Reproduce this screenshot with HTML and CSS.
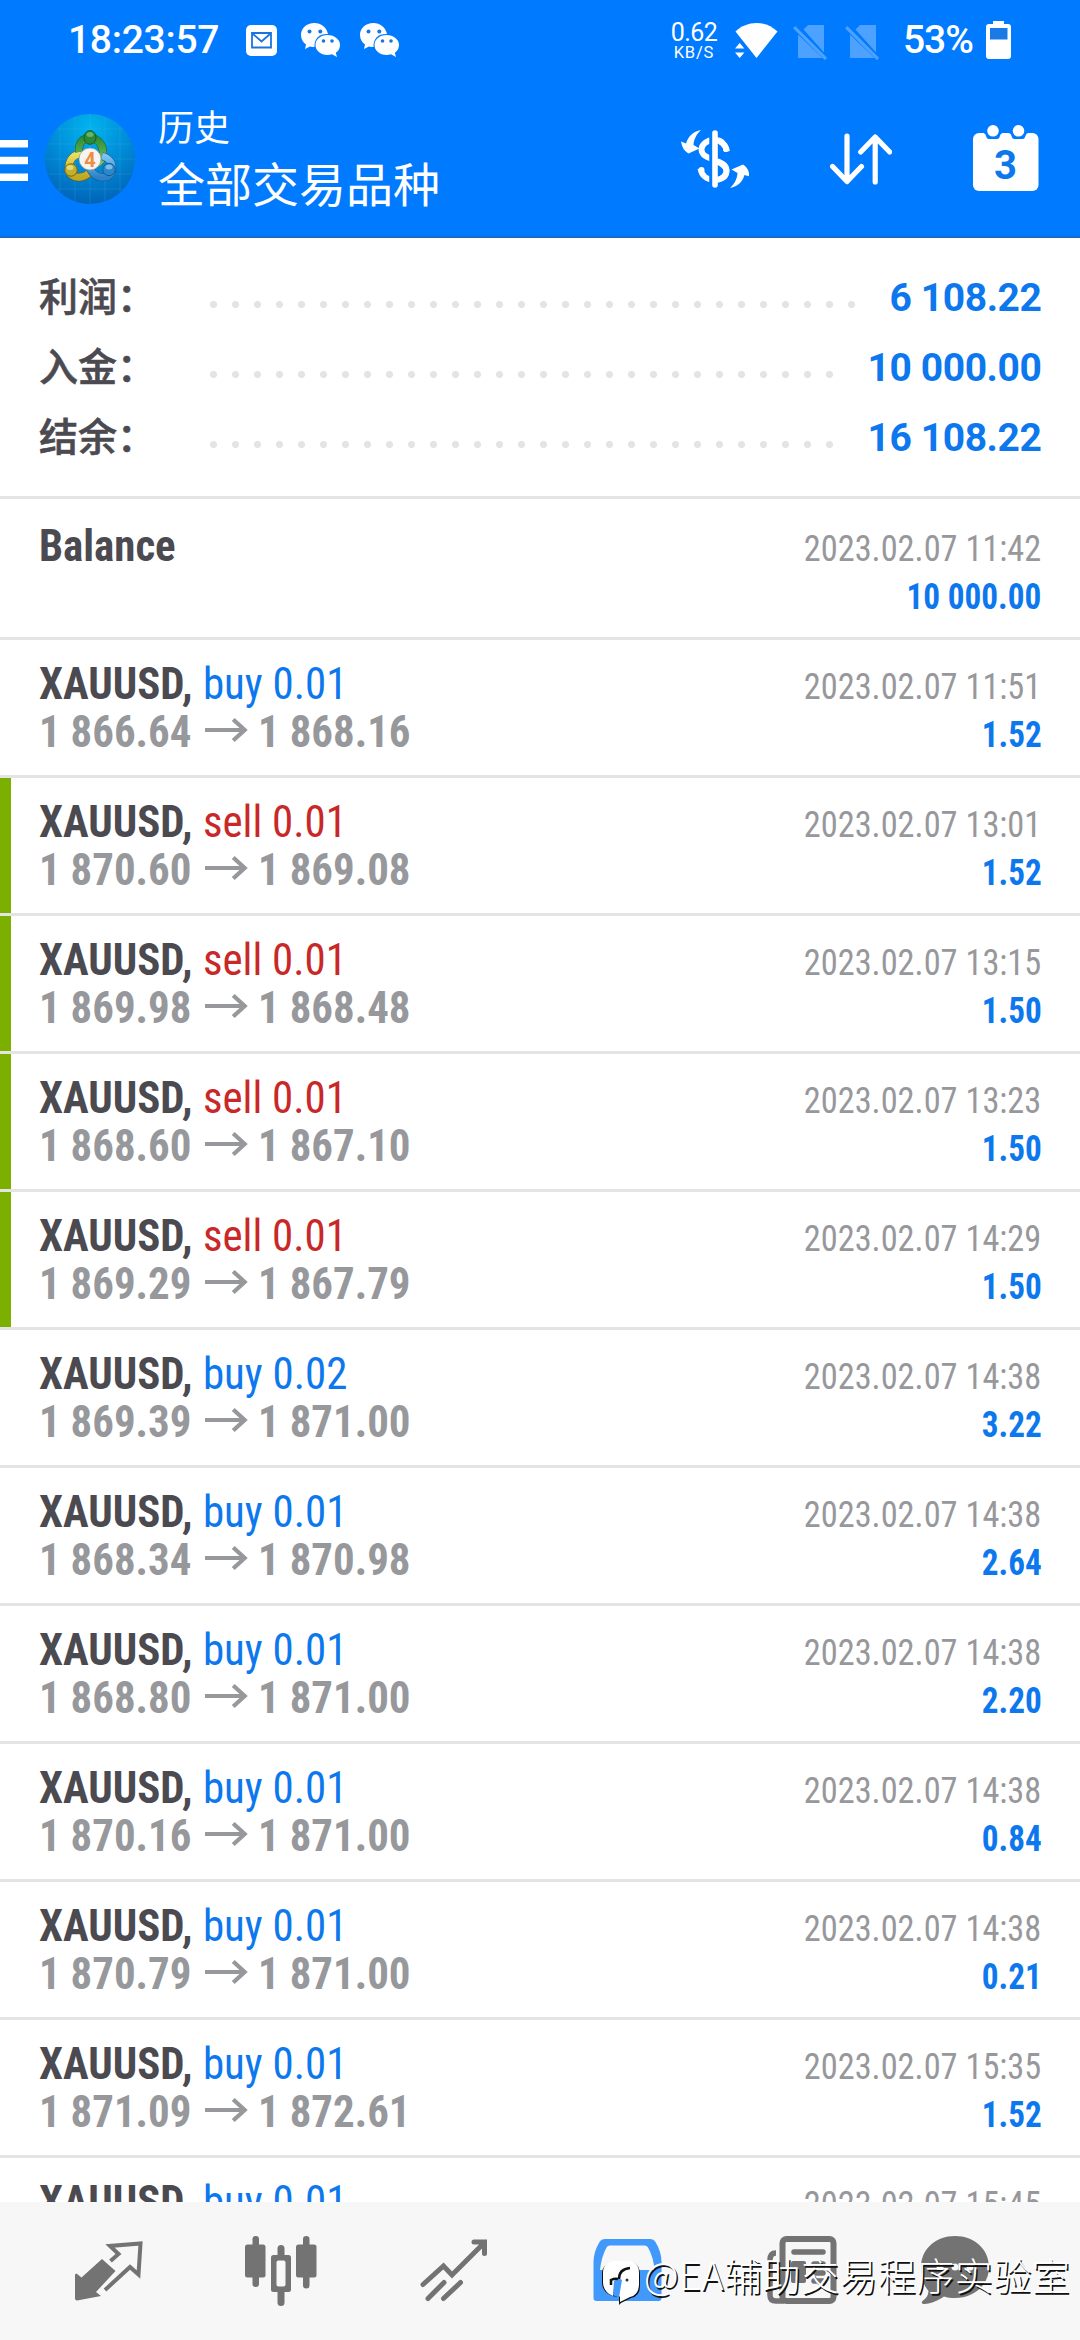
FILE: index.html
```
<!DOCTYPE html>
<html lang="zh-CN">
<head>
<meta charset="utf-8">
<title>历史</title>
<link rel="stylesheet" href="styles.css">
</head>
<body>
<svg class="defs" width="0" height="0">
  <defs>
    <symbol id="wechat" viewBox="0 0 40 36">
      <path fill="#fff" d="M14.5 1C6.500 1 1 6 1 13c0 4 2 7.500 5 9.500L5 27l5-2.500c1.500.4 3 .5 4.500.5C14 16 20 11.500 28 12 26.500 5 21 1 14.500 1z"/>
      <path fill="#fff" d="M27.500 13C20.500 13 15.500 17.500 15.500 23S20.500 33 27.500 33c1.500 0 3-.2 4.500-.7L37 35l-1.200-4.200C38.500 29 40 26.200 40 23c0-5.500-5.500-10-12.500-10z"/>
      <g fill="#1a74dd"><circle cx="9.500" cy="9.500" r="2"/><circle cx="20.300" cy="9.500" r="2"/><circle cx="23.500" cy="19" r="1.800"/><circle cx="32" cy="19" r="1.800"/></g>
    </symbol>
    <symbol id="nosim" viewBox="0 0 34 36">
      <path fill="#4da2ff" d="M10.500 5.500 15 1h16v27.500zM5 10.500 29.500 34H5z"/>
      <path stroke="#4da2ff" stroke-width="3.200" d="M1.200 3.200 33 35"/>
    </symbol>
    <symbol id="arrow" viewBox="0 0 44 26" preserveAspectRatio="none">
      <path fill="none" stroke="#97989c" stroke-width="4.200" d="M0 13h40M28.500 2.500 40 13 28.500 23.500"/>
    </symbol>
  </defs>
</svg>
<div class="screen">
  <header class="top">
    <div class="status">
      <div class="status-left">
        <span class="clock">18:23:57</span>
        <svg class="mail" viewBox="0 0 31 31"><rect width="31" height="31" rx="5" fill="#fff"/><path fill="none" stroke="#1a74dd" stroke-width="1.800" d="M6 8h19v14.500H6zM7 9l8.500 7.500L24 9"/></svg>
        <svg class="chat"><use href="#wechat"/></svg>
        <svg class="chat"><use href="#wechat"/></svg>
      </div>
      <div class="status-right">
        <div class="speed"><span class="speed-n">0.62</span><span class="speed-u">KB/S</span></div>
        <svg class="wifi" viewBox="0 0 43 36"><path fill="#fff" d="M.5 9.500C12-2 31-2 42.500 9.500L21.500 36z"/><path fill="#007aff" d="M0 13h2l9 12v11H0z"/><path fill="#fff" d="M0 26.500 4.700 21l4.700 5.500zM0 30.500h9.400L4.700 36z"/></svg>
        <svg class="sim"><use href="#nosim"/></svg>
        <svg class="sim"><use href="#nosim"/></svg>
        <span class="clock pct">53%</span>
        <svg class="battery" viewBox="0 0 25 38"><path fill="#fff" d="M7 0h11v3h4a3 3 0 0 1 3 3v29a3 3 0 0 1-3 3H3a3 3 0 0 1-3-3V6a3 3 0 0 1 3-3h4z"/><path fill="#1a7ae6" d="M4 7h17.500v11.500H4z"/></svg>
      </div>
    </div>
    <div class="bar">
      <svg class="menu" viewBox="0 0 28 41"><path fill="#fff" d="M0 0h28v7.500H0zM0 16.800h28v7.500H0zM0 33.500h28V41H0z"/></svg>
      <svg class="logo" viewBox="45 114 90 90">
        <defs>
          <radialGradient id="sky" cx=".5" cy=".15" r=".85"><stop offset="0" stop-color="#00b4ee"/><stop offset=".5" stop-color="#008dd8"/><stop offset="1" stop-color="#0064b8"/></radialGradient>
          <linearGradient id="gr" x1="0" y1="0" x2="0" y2="1"><stop offset="0" stop-color="#2c8f36"/><stop offset="1" stop-color="#7cc264"/></linearGradient>
          <linearGradient id="ye" x1="0" y1="0" x2="0" y2="1"><stop offset="0" stop-color="#e9df63"/><stop offset="1" stop-color="#c0a820"/></linearGradient>
          <linearGradient id="bl" x1="0" y1="0" x2="0" y2="1"><stop offset="0" stop-color="#7cc4f2"/><stop offset="1" stop-color="#2c82c8"/></linearGradient>
        </defs>
        <circle cx="90" cy="159" r="45" fill="url(#sky)"/>
        <path stroke="#4fb8f0" stroke-opacity=".2" fill="none" d="M60 126v66M75 117v84M90 114v90M105 117v84M120 126v66M57 129h66M49 144h82M45 159h90M49 174h82M57 189h66"/>
        <path fill="none" stroke="#6d5f10" stroke-width="8" d="M86 155c-9-3-16 2-17 11s5 12 12 11 9-5 11-9"/>
        <path fill="none" stroke="url(#ye)" stroke-width="7" d="M86 155c-9-3-16 2-17 11s5 12 12 11 9-5 11-9"/>
        <path fill="none" stroke="#1d5a28" stroke-width="8" d="M79 152c-1-9 4-14 11-14s13 6 13 14-3 10-7 12"/>
        <path fill="none" stroke="url(#gr)" stroke-width="7" d="M79 152c-1-9 4-14 11-14s13 6 13 14-3 10-7 12"/>
        <path fill="none" stroke="#174f80" stroke-width="8" d="M102 156c7 2 11 7 10 14s-6 8-12 7-9-6-11-10"/>
        <path fill="none" stroke="url(#bl)" stroke-width="7" d="M102 156c7 2 11 7 10 14s-6 8-12 7-9-6-11-10"/>
        <ellipse cx="90" cy="137.500" rx="6" ry="6.800" fill="#2a8a35" stroke="#175a22"/>
        <circle cx="71" cy="170" r="6.200" fill="#c4b02f" stroke="#78680f"/>
        <circle cx="109" cy="169.500" r="6.200" fill="#2b88cc" stroke="#155a92"/>
        <ellipse cx="90" cy="134.500" rx="3.500" ry="2.500" fill="#8fd08c" opacity=".6"/>
        <ellipse cx="70" cy="167.500" rx="3.500" ry="2.500" fill="#f2e995" opacity=".7"/>
        <ellipse cx="109" cy="167" rx="3.500" ry="2.500" fill="#9fd4f5" opacity=".7"/>
        <circle cx="90" cy="159" r="11" fill="#f6f4f3" stroke="#8a9a8c" stroke-width=".7"/>
        <text class="logo-n" x="90" y="166.500" text-anchor="middle">4</text>
      </svg>
      <div class="titles">
        <span class="title-sm">历史</span>
        <span class="title-lg">全部交易品种</span>
      </div>
      <svg class="act act-money" viewBox="681 130 68 58">
        <path fill="none" stroke="#fff" stroke-width="5.800" d="M727 151.500c-1-7-7-11.500-13-11.500-7 0-12.500 4.500-12.500 9.500 0 6 6 8 13 10.500 7 2.400 12 5 12 10.500 0 6-5.500 9.500-12 9.500-7.500 0-13-4.500-14-11.500"/>
        <path stroke="#007aff" stroke-width="9.500" d="M714 130v58"/>
        <path stroke="#fff" stroke-width="5.600" stroke-linecap="round" d="M715 133v52"/>
        <path fill="none" stroke="#fff" stroke-width="5.800" d="M716 140c6 .5 9 4 10.500 10M716 161c6 2.500 10.500 5 10.500 10s-4 8-10.500 9"/>
        <circle cx="726" cy="149" r="3" fill="#fff"/><circle cx="701.500" cy="170" r="3" fill="#fff"/>
        <path fill="#fff" d="M701 130c-5 5-7 9-7.500 15l6 3.500-11 5c-5-3-6.500-7-7.500-12l5 2c2-7 7-12 15-13.500zM730 188c5-5 7-9 7.500-15l-6-3.500 11.500-5c4.500 3 6 6.500 6.500 12l-5-1.500c-2 7-6.500 11.500-14.500 13z"/>
      </svg>
      <svg class="act act-sort" viewBox="830 133 62 52"><path fill="none" stroke="#fff" stroke-width="5.200" stroke-linecap="round" stroke-linejoin="round" d="M847 136v45M832.600 166.500 847 181.500l14.500-15M875.200 182v-45M860.700 152l14.500-15 14.500 15"/></svg>
      <svg class="act act-cal" viewBox="973 125 66 66">
        <rect x="973" y="133" width="65.500" height="58" rx="6" fill="#fff"/>
        <path fill="#007aff" d="M984 132h18v1.500c-2.500 0-1.500 5.500-5 5.500h-8c-3.500 0-2.500-5.500-5-5.500zM1009.500 132h18v1.500c-2.500 0-1.500 5.500-5 5.500h-8c-3.500 0-2.500-5.500-5-5.500z"/>
        <circle cx="993" cy="130.800" r="5.800" fill="#fff"/><circle cx="1018.500" cy="130.800" r="5.800" fill="#fff"/>
        <text class="cal-n" x="1005.500" y="178.500" text-anchor="middle">3</text>
      </svg>
    </div>
  </header>

  <section class="summary">
    <div class="sum"><span class="sum-k">利润：</span><span class="dots d30"></span><span class="sum-v">6 108.22</span></div>
    <div class="sum"><span class="sum-k">入金：</span><span class="dots d29"></span><span class="sum-v">10 000.00</span></div>
    <div class="sum"><span class="sum-k">结余：</span><span class="dots d29"></span><span class="sum-v">16 108.22</span></div>
  </section>

  <main class="list">
    <article class="row first"><div class="ln"><p><b class="sym">Balance</b></p><time>2023.02.07 11:42</time></div><div class="ln"><p>&nbsp;</p><b class="pl">10 000.00</b></div></article>
    <article class="row"><div class="ln"><p><b class="sym">XAUUSD,</b><span class="buy">buy 0.01</span></p><time>2023.02.07 11:51</time></div><div class="ln"><p class="px">1 866.64<svg><use href="#arrow"/></svg>1 868.16</p><b class="pl">1.52</b></div></article>
    <article class="row tp"><div class="ln"><p><b class="sym">XAUUSD,</b><span class="sell">sell 0.01</span></p><time>2023.02.07 13:01</time></div><div class="ln"><p class="px">1 870.60<svg><use href="#arrow"/></svg>1 869.08</p><b class="pl">1.52</b></div></article>
    <article class="row tp"><div class="ln"><p><b class="sym">XAUUSD,</b><span class="sell">sell 0.01</span></p><time>2023.02.07 13:15</time></div><div class="ln"><p class="px">1 869.98<svg><use href="#arrow"/></svg>1 868.48</p><b class="pl">1.50</b></div></article>
    <article class="row tp"><div class="ln"><p><b class="sym">XAUUSD,</b><span class="sell">sell 0.01</span></p><time>2023.02.07 13:23</time></div><div class="ln"><p class="px">1 868.60<svg><use href="#arrow"/></svg>1 867.10</p><b class="pl">1.50</b></div></article>
    <article class="row tp"><div class="ln"><p><b class="sym">XAUUSD,</b><span class="sell">sell 0.01</span></p><time>2023.02.07 14:29</time></div><div class="ln"><p class="px">1 869.29<svg><use href="#arrow"/></svg>1 867.79</p><b class="pl">1.50</b></div></article>
    <article class="row"><div class="ln"><p><b class="sym">XAUUSD,</b><span class="buy">buy 0.02</span></p><time>2023.02.07 14:38</time></div><div class="ln"><p class="px">1 869.39<svg><use href="#arrow"/></svg>1 871.00</p><b class="pl">3.22</b></div></article>
    <article class="row"><div class="ln"><p><b class="sym">XAUUSD,</b><span class="buy">buy 0.01</span></p><time>2023.02.07 14:38</time></div><div class="ln"><p class="px">1 868.34<svg><use href="#arrow"/></svg>1 870.98</p><b class="pl">2.64</b></div></article>
    <article class="row"><div class="ln"><p><b class="sym">XAUUSD,</b><span class="buy">buy 0.01</span></p><time>2023.02.07 14:38</time></div><div class="ln"><p class="px">1 868.80<svg><use href="#arrow"/></svg>1 871.00</p><b class="pl">2.20</b></div></article>
    <article class="row"><div class="ln"><p><b class="sym">XAUUSD,</b><span class="buy">buy 0.01</span></p><time>2023.02.07 14:38</time></div><div class="ln"><p class="px">1 870.16<svg><use href="#arrow"/></svg>1 871.00</p><b class="pl">0.84</b></div></article>
    <article class="row"><div class="ln"><p><b class="sym">XAUUSD,</b><span class="buy">buy 0.01</span></p><time>2023.02.07 14:38</time></div><div class="ln"><p class="px">1 870.79<svg><use href="#arrow"/></svg>1 871.00</p><b class="pl">0.21</b></div></article>
    <article class="row"><div class="ln"><p><b class="sym">XAUUSD,</b><span class="buy">buy 0.01</span></p><time>2023.02.07 15:35</time></div><div class="ln"><p class="px">1 871.09<svg><use href="#arrow"/></svg>1 872.61</p><b class="pl">1.52</b></div></article>
    <article class="row"><div class="ln"><p><b class="sym">XAUUSD,</b><span class="buy">buy 0.01</span></p><time>2023.02.07 15:45</time></div></article>
  </main>

  <nav class="tabs">
    <svg viewBox="22 2202 173 138">
      <path fill="#737373" d="M102 2259 115.500 2271 96 2292l5 4-24 4.500q-2 0-2-2v-24l1.500-1 5 4z"/>
      <path fill="none" stroke="#737373" stroke-width="4" stroke-linejoin="miter" d="M110.500 2261l8-7-8.500-8 30.500-2.500-2 31-8.500-7.500-25 23"/>
    </svg>
    <svg viewBox="195 2202 173 138"><g fill="#737373"><rect x="245" y="2244.500" width="20.500" height="33" rx="2.500"/><rect x="252.500" y="2236" width="6.500" height="51" rx="3.200"/><rect x="296" y="2244.500" width="20.500" height="33" rx="2.500"/><rect x="303" y="2236" width="6.500" height="52.500" rx="3.200"/><rect x="277.500" y="2245" width="7" height="61" rx="3.500"/><rect x="271" y="2255" width="20" height="37" rx="2.500"/></g><rect x="276.500" y="2260.500" width="9" height="26" rx="2" fill="#f7f7f8"/></svg>
    <svg viewBox="368 2202 173 138"><path fill="none" stroke="#737373" stroke-width="5" stroke-linecap="round" d="M423 2284.500 443.500 2266l8.500 9 32-32M428 2298.500l16-16M443.500 2298.500l17-16M474 2242h10.500v11.500"/></svg>
    <svg viewBox="541 2202 173 138"><path fill="#4199fb" fill-rule="evenodd" d="M605 2239h45q3.500 0 5.500 3 6 10 6 20v36q0 3-3 3h-62q-3 0-3-3v-36q0-10 6-20 2-3 5.500-3zM610 2245.500q-2.500 0-3.500 2-5 9-6.500 22.500h54.500q-1-13-6.500-22.500-1-2-3.500-2z"/></svg>
    <svg viewBox="714 2202 173 138"><g fill="none" stroke="#737373"><rect x="782.500" y="2239" width="51" height="62" rx="4" stroke-width="6"/><path stroke-width="5.500" d="M776 2253q-6 0-6 7v35q0 6 6 6h8"/><path stroke-width="5.500" stroke-linecap="round" d="M794 2252h29M814 2264h9M814 2273h9M814 2281h9"/></g><rect x="791" y="2261" width="15" height="22" rx="2" fill="#737373"/></svg>
    <svg viewBox="887 2202 173 138"><path fill="#737373" d="M955 2236c19 0 34 13 34 31s-15 31-34 31c-4 0-8-.5-11-1.500-6 4-12 7-20 7.500-2 0-3-1.500-1.500-3 4-3 6-6 6-10-5-6-7.500-13-7.500-24 0-18 15-31 34-31z"/><g fill="#f7f7f8"><circle cx="940" cy="2267" r="3.500"/><circle cx="955" cy="2267" r="3.500"/><circle cx="970" cy="2267" r="3.500"/></g></svg>
  </nav>

  <div class="mark">
    <svg viewBox="600 2256 44 50">
      <path d="M617 2262h11q12 0 12 13v11q0 10-9 12l-10 5-2 2v-8q-16-1-17-14v-9q0-12 15-12z" fill="#111"/>
      <path d="M616 2261h11q12 0 12 12v11q0 11-9 13l-10 5v-5l-1-1 1-15-5 1-2 14q-9-3-10-13v-10q0-12 13-12z" fill="#fff"/>
      <path fill="#4199fb" d="M614 2281q4-4 8-1l-3 17q-4 0-6-2z"/>
      <path fill="none" stroke="#111" stroke-width="2.500" d="M630 2268q-11 1-11 11M611 2285v-5q4-2 7-1"/>
      <circle cx="627" cy="2280" r="1.500" fill="#333"/>
    </svg>
    <span>@EA辅助交易程序实验室</span>
  </div>
</div>
</body>
</html>
```
FILE: styles.css
```
* { box-sizing: border-box; }
body { margin: 0; background: #fff; font-family: Roboto, "Noto Sans CJK SC", sans-serif; }
p { margin: 0; }
svg { display: block; flex: none; }
.defs { position: absolute; }
.screen { position: relative; display: flex; flex-direction: column; width: 1080px; height: 2340px; overflow: hidden; }

.top { flex: none; height: 238px; background: #007aff; border-bottom: 2px solid #1b6cc6; color: #fff; }
.status { display: flex; justify-content: space-between; height: 80px; padding: 0 69px 0 68px; }
.status-left, .status-right { display: flex; align-items: center; }
.clock { font-size: 39px; font-weight: 500; line-height: 80px; letter-spacing: -.3px; }
.mail { width: 31px; height: 31px; margin: 1px 23px 0 27px; }
.chat { width: 40px; height: 36px; margin-right: 19px; }
.speed { display: flex; flex-direction: column; align-items: center; width: 46px; margin-right: 18px; }
.speed-n { font-size: 25px; line-height: 24px; letter-spacing: -.6px; margin-top: 1px; }
.speed-u { font-size: 16.500px; line-height: 16px; letter-spacing: .8px; }
.wifi { width: 43px; height: 36px; margin-right: 15px; }
.sim { width: 34px; height: 36px; margin: 3px 18px 0 0; }
.pct { margin-left: 6px; margin-right: 13px; letter-spacing: -1px; }
.battery { width: 25px; height: 38px; }
.bar { display: flex; height: 156px; }
.menu { width: 28px; height: 41px; margin-top: 60px; }
.logo { width: 90px; height: 90px; margin: 34px 0 0 17px; }
.logo-n { font: 700 20px Roboto, sans-serif; fill: #ee8d3c; }
.titles { display: flex; flex-direction: column; width: 500px; margin-left: 23px; padding-top: 27px; white-space: nowrap; }
.title-sm { font-size: 36px; line-height: 44px; }
.title-lg { font-size: 47px; line-height: 70px; }
.act-money { width: 68px; height: 58px; margin: 50px 0 0 23px; }
.act-sort { width: 62px; height: 52px; margin: 53px 0 0 81px; }
.act-cal { width: 66px; height: 66px; margin: 45px 0 0 81px; }
.cal-n { font: 700 40px Roboto, sans-serif; fill: #0d78ee; }

.summary { flex: none; height: 261px; padding: 24px 38.500px 0 39px; border-bottom: 3px solid #e4e4e4; }
.sum { display: flex; align-items: center; height: 70px; }
.sum-k { width: 171px; margin-top: -7px; font: 500 39px/70px "Noto Sans CJK SC", sans-serif; color: #4b4a50; -webkit-text-stroke: .6px #4b4a50; }
.dots { height: 7px; margin-top: 15px; background: radial-gradient(circle at 3.500px 3.500px, #e4e4e4 3.200px, transparent 3.900px) 0 0 / 22px 7px repeat-x; }
.d30 { width: 646px; }
.d29 { width: 624px; }
.sum-v { margin: 1px 0 0 auto; font-size: 39px; font-weight: 700; letter-spacing: -.4px; color: #0d78ee; }

.list { flex: 1; min-height: 0; overflow: hidden; font-family: "Roboto Condensed", Roboto, sans-serif; }
.row { height: 138px; padding: 20px 38.500px 0 39px; border-bottom: 3px solid #e4e4e4; }
.row.first { height: 141px; padding-top: 23px; }
.tp { background: linear-gradient(#7cb000, #7cb000) 0 0 / 11px 100% no-repeat; }
.ln { display: flex; justify-content: space-between; align-items: baseline; height: 48px; line-height: 48px; white-space: nowrap; }
.ln p { display: flex; font-size: 45px; transform: scaleX(.953); transform-origin: 0 0; }
.sym { width: 172px; color: #4b4a50; }
.buy { color: #0d78ee; }
.sell { color: #c82828; }
.ln .px { font-weight: 700; color: #97989c; }
.px svg { width: 46px; height: 26px; margin: 9px 10px 0 14px; }
time { font-size: 37.500px; line-height: 1; color: #97989c; transform: scaleX(.916); transform-origin: 100% 0; }
.pl { font-size: 37.500px; line-height: 1; color: #0d78ee; transform: scaleX(.885); transform-origin: 100% 0; }

.tabs { flex: none; display: flex; height: 138px; padding-left: 22px; background: #f7f7f8; }
.tabs svg { width: 173px; height: 138px; }

.mark { position: absolute; left: 600px; top: 2256px; display: flex; align-items: flex-start; height: 50px; color: #fff; }
.mark svg { width: 44px; height: 50px; }
.mark span { margin-top: -7px; font: 300 38px/50px "Noto Sans CJK SC", sans-serif; letter-spacing: .45px; white-space: nowrap; text-shadow: 1.500px 1.500px .5px #111; }
```
